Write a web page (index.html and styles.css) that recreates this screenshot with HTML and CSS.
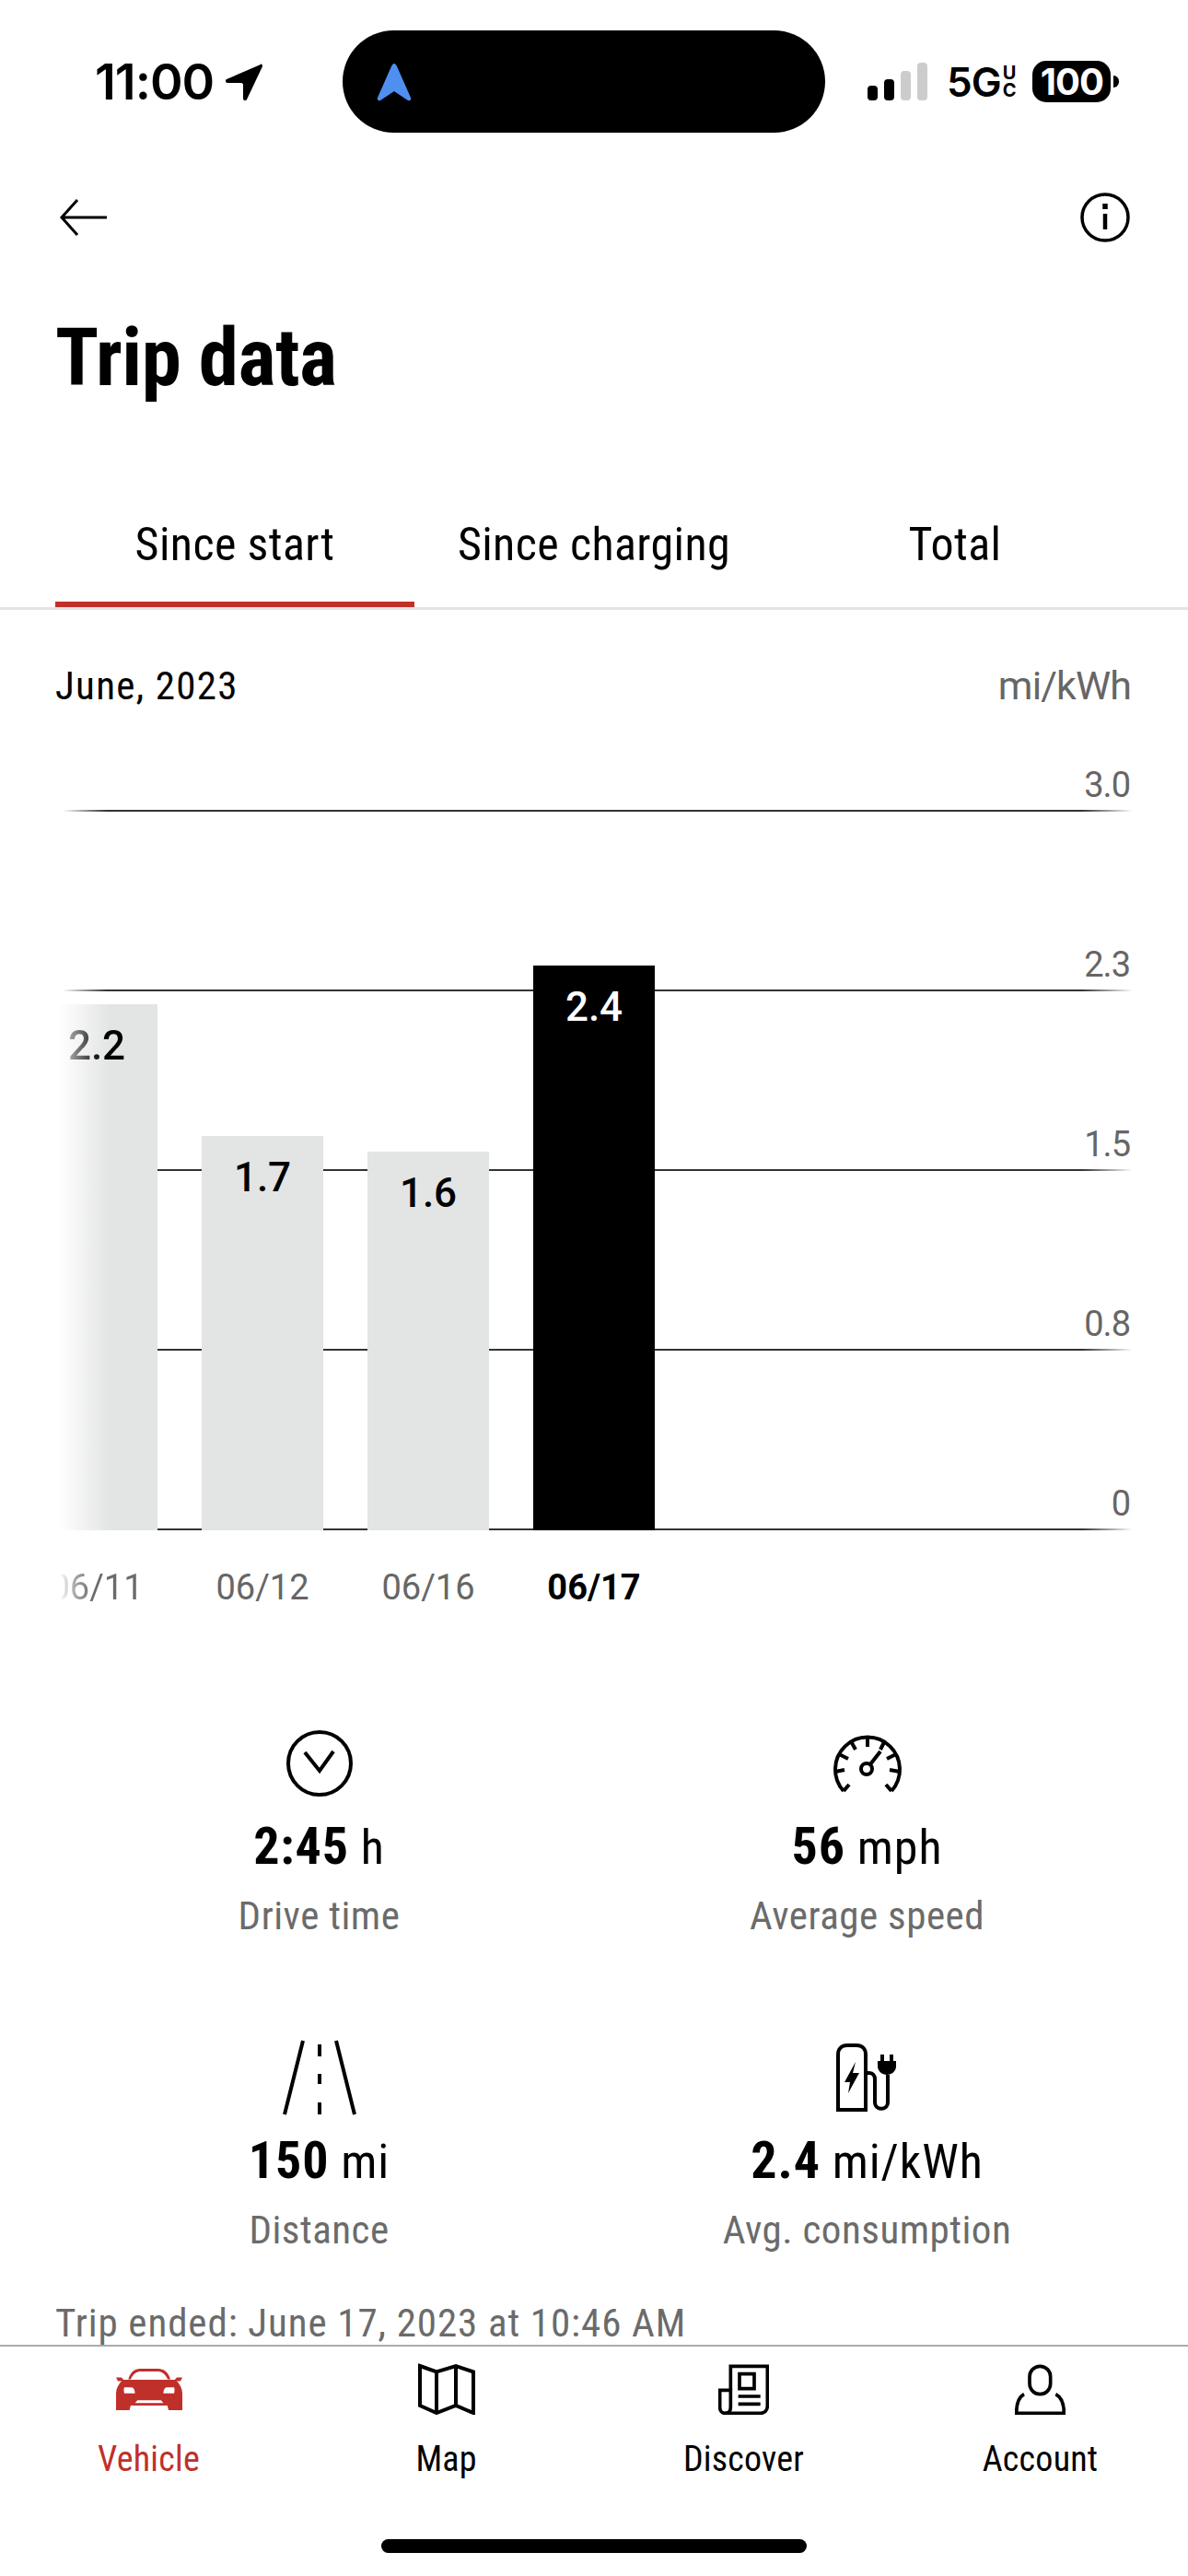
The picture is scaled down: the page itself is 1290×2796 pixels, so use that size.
FILE: index.html
```html
<!DOCTYPE html>
<html lang="en">

<head>
    <meta charset="UTF-8">
    <meta name="viewport" content="width=device-width, initial-scale=1.0">
    <title>Trip data</title>
    <link rel="stylesheet" href="styles.css">
</head>

<body>
    <div class="page">

        <!-- status bar -->
        <div class="status-bar">
            <div class="status-left">
                <span class="clock">11:00</span>
                <svg class="loc-arrow" width="42" height="42" viewBox="0 0 42 42"><path d="M39 2 2 18c-2 1-1 4 1 4h15c1 0 2 1 2 2v15c0 2 3 3 4 1L41 4c0-2-1-3-2-2z" fill="#000"/></svg>
            </div>
            <div class="island">
                <svg width="38" height="42" viewBox="0 0 38 42"><path d="M19 1c1 0 2 1 3 3l15 34c1 2-1 4-3 3L19 31 4 41c-2 1-4-1-3-3L16 4c1-2 2-3 3-3z" fill="#4f8ff0"/></svg>
            </div>
            <div class="status-right">
                <div class="signal">
                    <i class="s1"></i><i class="s2"></i><i class="s3 off"></i><i class="s4 off"></i>
                </div>
                <div class="network"><span>5G</span><span class="uc">U<br>C</span></div>
                <div class="battery"><span>100</span></div>
                <div class="battery-nub"></div>
            </div>
        </div>

        <!-- back and info -->
        <div class="nav-row">
            <svg width="52" height="42" viewBox="0 0 52 42" fill="none" stroke="#000" stroke-width="3"><path d="M52 21H3M20 2 3 21l17 19"/></svg>
            <svg width="54" height="54" viewBox="0 0 54 54" fill="none" stroke="#000" stroke-width="3.5"><circle cx="27" cy="27" r="25"/><path d="M27 23v17" stroke-width="4.500"/><path d="M27 12v6" stroke-width="5.500"/></svg>
        </div>

        <h1 class="title">Trip data</h1>

        <!-- tabs -->
        <div class="tabs">
            <div class="tab active">Since start</div>
            <div class="tab">Since charging</div>
            <div class="tab">Total</div>
        </div>

        <div class="chart-head">
            <span>June, 2023</span>
            <span class="unit">mi/kWh</span>
        </div>

        <!-- chart -->
        <div class="chart">
            <div class="grid">
                <div class="grid-row"><span>3.0</span></div>
                <div class="grid-row"><span>2.3</span></div>
                <div class="grid-row"><span>1.5</span></div>
                <div class="grid-row"><span>0.8</span></div>
                <div class="grid-row"><span>0</span></div>
            </div>
            <div class="bars">
                <div class="bar first" style="height: 571px"><span>2.2</span></div>
                <div class="bar" style="height: 428px"><span>1.7</span></div>
                <div class="bar" style="height: 411px"><span>1.6</span></div>
                <div class="bar current" style="height: 613px"><span>2.4</span></div>
            </div>
        </div>
        <div class="dates">
            <div class="date first">06/11</div>
            <div class="date">06/12</div>
            <div class="date">06/16</div>
            <div class="date current">06/17</div>
        </div>

        <!-- stats -->
        <div class="stats">
            <div class="stat">
                <div class="stat-icon">
                    <svg width="74" height="74" viewBox="0 0 74 74" fill="none" stroke="#000" stroke-width="4"><circle cx="37" cy="37" r="34"/><path d="M21 25l16 20 15-21"/></svg>
                </div>
                <div class="stat-value"><b>2:45</b> h</div>
                <div class="stat-label">Drive time</div>
            </div>
            <div class="stat">
                <div class="stat-icon">
                    <svg width="76" height="66" viewBox="0 0 76 66" fill="none" stroke="#000" stroke-width="4"><path d="M12 63a35 35 0 1 1 52 0"/><path d="M38 4v11M20 9l5 9M7 23l10 5M3 42l10-2M57 8l-5 10M69 23l-10 5M73 42l-11-2M12 63l6-7M64 63l-6-7"/><circle cx="37" cy="39" r="6"/><path d="M41 34l11-14"/></svg>
                </div>
                <div class="stat-value"><b>56</b> mph</div>
                <div class="stat-label">Average speed</div>
            </div>
            <div class="stat">
                <div class="stat-icon">
                    <svg width="80" height="82" viewBox="0 0 80 82" fill="none" stroke="#000" stroke-width="4"><path d="M22 1 2 81M58 1l20 80M40 5v13M40 37v11M40 68v13"/></svg>
                </div>
                <div class="stat-value"><b>150</b> mi</div>
                <div class="stat-label">Distance</div>
            </div>
            <div class="stat">
                <div class="stat-icon">
                    <svg width="68" height="74" viewBox="0 0 68 74" fill="none" stroke="#000" stroke-width="4"><path d="M2 72V12C2 6 6 2 12 2h10c6 0 10 4 10 10v60z"/><path d="M21 20 9 42h6l-2 12 12-22h-7z" fill="#000" stroke="none"/><path d="M32 32h4c4 0 6 3 6 7v25c0 9 14 9 14 0V34"/><path d="M45 19h20v6c0 5-5 9-10 9s-10-4-10-9z" fill="#000" stroke="none"/><path d="M50 12v9M60 12v9"/></svg>
                </div>
                <div class="stat-value"><b>2.4</b> mi/kWh</div>
                <div class="stat-label">Avg. consumption</div>
            </div>
        </div>

        <div class="trip-ended">Trip ended: June 17, 2023 at 10:46 AM</div>

        <!-- bottom nav -->
        <div class="tabbar">
            <div class="tabbar-item active">
                <div class="tabbar-icon">
                    <svg width="72" height="45" viewBox="0 0 217 135" fill="#c0302a"><path d="M40 34C48 10 60 0 80 0h57c20 0 33 10 41 34h-9C160 16 150 9 135 9H82C67 9 57 16 48 34z"/><path d="M22 36h173c14 14 22 29 22 44v55h-45l-4-15H48l-4 15H0V80c0-15 8-30 22-44z"/><path d="M0 28h18l8 9-8 3H6zM217 28h-18l-8 9 8 3h12z"/><path d="M27 61h24c6 0 11 9 11 19H27c-2-7-2-13 0-19zM190 61h-24c-6 0-11 9-11 19h35c2-7 2-13 0-19z" fill="#fff"/><path d="M62 112l8-9h77l8 9z" fill="#fff"/></svg>
                </div>
                <span>Vehicle</span>
            </div>
            <div class="tabbar-item">
                <div class="tabbar-icon">
                    <svg width="62" height="56" viewBox="0 0 62 56" fill="none" stroke="#000" stroke-width="4"><path d="M2 3l18 6.500L41 3l19 6.500V54l-19-8-21 8-18-8z"/><path d="M20 9.500V54M41 3v43"/></svg>
                </div>
                <span>Map</span>
            </div>
            <div class="tabbar-item">
                <div class="tabbar-icon">
                    <svg width="55" height="55" viewBox="28 30 165 165" fill="none" stroke="#000" stroke-width="11"><path d="M68 115V37h120v128c0 17-10 25-23 25H50"/><path d="M68 115H33v55c0 13 7 20 17 20 12 0 18-7 18-20z"/><path d="M97 62h48v48H97zM93 135h72M93 160h72"/></svg>
                </div>
                <span>Discover</span>
            </div>
            <div class="tabbar-item">
                <div class="tabbar-icon">
                    <svg width="55" height="55" viewBox="992 30 165 165" fill="none" stroke="#000" stroke-width="11"><rect x="1040" y="37" width="68" height="91" rx="34"/><path d="M1022 128c-22 12-25 37-25 62h155c0-25-4-50-27-62"/></svg>
                </div>
                <span>Account</span>
            </div>
        </div>

        <div class="home-bar"></div>
    </div>
</body>

</html>
```

FILE: styles.css
```css
* {
    box-sizing: border-box;
}

body {
    margin: 0;
    background: #fff;
    color: #000;
    font-family: "Roboto", "Liberation Sans", sans-serif;
}

.page {
    width: 1290px;
    height: 2796px;
    display: flex;
    flex-direction: column;
    overflow: hidden;
}

/* status bar */
.status-bar {
    height: 144px;
    margin-top: 33px;
    padding-left: 103px;
    display: flex;
    align-items: flex-start;
}

.status-left {
    width: 269px;
    height: 111px;
    display: flex;
    align-items: center;
    gap: 12px;
}

.clock {
    font-family: "Inter", sans-serif;
    font-size: 54px;
    font-weight: 600;
    letter-spacing: -1px;
}

.island {
    width: 524px;
    height: 111px;
    padding-left: 37px;
    display: flex;
    align-items: center;
    background: #000;
    border-radius: 56px;
}

.status-right {
    height: 111px;
    padding-left: 46px;
    display: flex;
    align-items: center;
}

.signal {
    display: flex;
    align-items: flex-end;
    gap: 7px;
    height: 41px;
}

.signal i {
    width: 11px;
    background: #000;
    border-radius: 4px;
}

.signal .s1 { height: 16px; }
.signal .s2 { height: 23px; }
.signal .s3 { height: 32px; }
.signal .s4 { height: 41px; }

.signal .off {
    background: #ccc;
}

.network {
    margin-left: 21px;
    display: flex;
    align-items: center;
    font-family: "Inter", sans-serif;
    font-size: 44px;
    font-weight: 600;
    letter-spacing: -1px;
}

.uc {
    margin-left: 2px;
    font-size: 20px;
    line-height: 19px;
    font-weight: 700;
}

.battery {
    width: 85px;
    height: 45px;
    margin-left: 19px;
    background: #000;
    color: #fff;
    border-radius: 15px;
    font-family: "Inter", sans-serif;
    font-size: 40px;
    font-weight: 700;
    letter-spacing: -1px;
    display: flex;
    align-items: center;
    justify-content: center;
}

.battery-nub {
    width: 6px;
    height: 13px;
    margin-left: 3px;
    background: #000;
    border-radius: 0 7px 7px 0;
}

/* header */
.nav-row {
    height: 54px;
    margin-top: 32px;
    padding: 0 63px 0 64px;
    display: flex;
    justify-content: space-between;
    align-items: center;
}

.title {
    margin: 75px 0 0 60px;
    font-size: 87px;
    font-stretch: 75%;
    letter-spacing: -0.5px;
    line-height: 100px;
    font-weight: 700;
}

/* tabs */
.tabs {
    height: 115px;
    margin-top: 109px;
    padding: 0 60px;
    display: flex;
    border-bottom: 3px solid #e3e4e4;
}

.tab {
    width: 390px;
    padding-top: 14px;
    font-size: 50px;
    font-stretch: 87.5%;
    letter-spacing: 0.4px;
    line-height: 60px;
    text-align: center;
}

.tab:last-child {
    padding-left: 4px;
}

.tab.active {
    border-bottom: 6px solid #c0302a;
}

.chart-head {
    margin-top: 54px;
    padding: 0 62px 0 60px;
    display: flex;
    justify-content: space-between;
    font-size: 43px;
    font-stretch: 87.5%;
    letter-spacing: 1.3px;
    line-height: 56px;
}

.unit {
    color: #666;
    font-stretch: 100%;
    letter-spacing: -0.9px;
}

/* chart */
.chart {
    position: relative;
    height: 782px;
    margin: 107px 60px 0;
}

.grid {
    position: absolute;
    left: 8px;
    right: 0;
    top: 0;
    bottom: 0;
    display: flex;
    flex-direction: column;
    justify-content: space-between;
}

.grid-row {
    height: 2px;
    position: relative;
    background: linear-gradient(to right, transparent, #333 48px, #333 calc(100% - 55px), transparent);
}

.grid-row span {
    position: absolute;
    right: 3px;
    bottom: 7px;
    font-size: 38px;
    letter-spacing: -1px;
    line-height: 44px;
    color: #666;
}

.bars {
    position: absolute;
    left: -21px;
    bottom: 0;
    display: flex;
    align-items: flex-end;
    gap: 48px;
}

.bar {
    width: 132px;
    padding-top: 20px;
    background: #e3e4e4;
    text-align: center;
    font-size: 44px;
    line-height: 50px;
    font-weight: 500;
}

.bar.first {
    background: linear-gradient(to right, #fff 25px, #e3e4e4 80px);
}

.bar.first span {
    background: linear-gradient(to right, #aaa, #000 60%);
    -webkit-background-clip: text;
    background-clip: text;
    color: transparent;
}

.bar.current {
    background: #000;
    color: #fff;
}

.dates {
    margin: 38px 0 0 39px;
    display: flex;
    gap: 48px;
    overflow: hidden;
}

.date {
    width: 132px;
    font-size: 38px;
    line-height: 48px;
    text-align: center;
    color: #666;
}

.date.first {
    background: linear-gradient(to right, transparent 26px, #aaa 42px, #6b6b6b 62px);
    -webkit-background-clip: text;
    background-clip: text;
    color: transparent;
}

.date.current {
    color: #000;
    font-weight: 700;
}

/* stats */
.stats {
    margin: 125px 0 0 0;
    padding: 0 49px;
    display: grid;
    grid-template-columns: 595px 595px;
    row-gap: 108px;
}

.stat {
    text-align: center;
}

.stat-icon {
    height: 84px;
    display: flex;
    justify-content: center;
    align-items: center;
}

.stat-value {
    margin-top: 15px;
    font-size: 52px;
    font-stretch: 87.5%;
    letter-spacing: 0.9px;
    line-height: 66px;
}

.stat-value b {
    font-size: 56px;
    font-weight: 700;
}

.stat-label {
    margin-top: 14px;
    font-size: 43px;
    font-stretch: 87.5%;
    letter-spacing: 0.5px;
    line-height: 52px;
    color: #6b6b6b;
}

.trip-ended {
    margin: 52px 0 0 60px;
    font-size: 43px;
    font-stretch: 87.5%;
    letter-spacing: 0.9px;
    line-height: 47px;
    color: #6b6b6b;
}

/* bottom nav */
.tabbar {
    padding-top: 18px;
    border-top: 2px solid #aaa;
    display: grid;
    grid-template-columns: 323px 323px 323px 321px;
    background: #fff;
}

.tabbar-item {
    display: flex;
    flex-direction: column;
    align-items: center;
    font-size: 38px;
    font-stretch: 87.5%;
    letter-spacing: 0.2px;
    line-height: 48px;
}

.tabbar-item.active {
    color: #c0302a;
}

.tabbar-icon {
    height: 56px;
    margin-bottom: 24px;
    display: flex;
    align-items: center;
}

.home-bar {
    width: 462px;
    height: 15px;
    margin: 63px auto 0;
    background: #000;
    border-radius: 8px;
}
```
